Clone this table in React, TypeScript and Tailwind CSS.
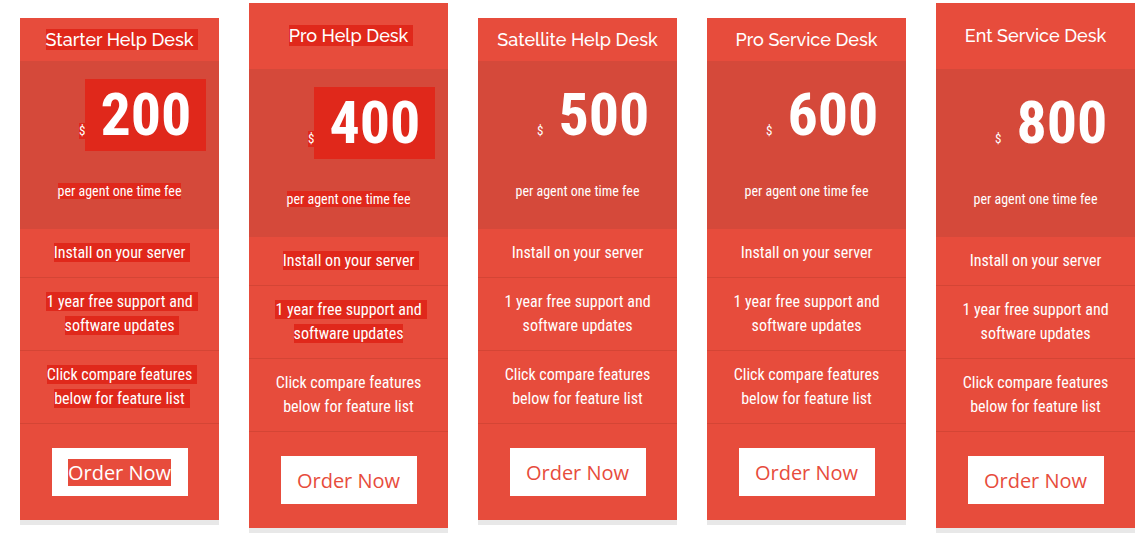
type Plan = {
  name: string;
  price: string;
  featured?: boolean;
  hl: 'all' | 'top' | 'none';
};

const plans: Plan[] = [
  { name: 'Starter Help Desk', price: '200', hl: 'all' },
  { name: 'Pro Help Desk', price: '400', featured: true, hl: 'top' },
  { name: 'Satellite Help Desk', price: '500', hl: 'none' },
  { name: 'Pro Service Desk', price: '600', hl: 'none' },
  { name: 'Ent Service Desk', price: '800', featured: true, hl: 'none' },
];

// selected-text look on some cards
function Mark({ on, tail, children }: { on: boolean; tail?: boolean; children: React.ReactNode }) {
  if (!on) return <span>{children}</span>;
  return <span className={`bg-[#e0281b] ${tail ? 'pr-[5px] -mr-[5px]' : ''}`}>{children}</span>;
}

function PricingCard({ plan }: { plan: Plan }) {
  const all = plan.hl === 'all';
  const top = plan.hl !== 'none';

  return (
    <div
      className={`w-[199px] shrink-0 bg-[#e74c3c] border-b-[5px] border-[#e8e8e8] text-white ${
        plan.featured ? 'mt-[3px]' : 'mt-[18px]'
      }`}
    >
      {/* Header */}
      <div
        className={`flex items-center justify-center text-[18px] font-medium font-['Raleway',sans-serif] ${
          plan.featured ? 'h-[66px]' : 'h-[43px]'
        }`}
      >
        <span className="leading-[21px] -mt-px">
          <Mark on={top} tail>
            {plan.name}
          </Mark>
        </span>
      </div>

      {/* Price */}
      <div className="h-[168px] bg-[#d5493a] pt-[18px] font-['Roboto_Condensed',sans-serif]">
        <div className="flex items-baseline pl-[59px]">
          <span className={`text-[13px] leading-4 ${top ? 'bg-[#e0281b]' : ''}`}>$</span>
          <span className={`pl-[15px] pr-[15px] text-[60px] font-bold leading-[72px] ${top ? 'bg-[#e0281b]' : ''}`}>
            {plan.price}
          </span>
        </div>
        <div className="mt-[32px] text-center text-[14px] leading-4">
          <Mark on={top}>per agent one time fee</Mark>
        </div>
      </div>

      {/* Features */}
      <div className="font-['Roboto_Condensed',sans-serif] text-[16px] leading-6 text-center">
        <div className="h-[49px] pt-3 border-b border-[#d44535]">
          <Mark on={top} tail>
            Install on your server
          </Mark>
        </div>
        <div className="h-[73px] pt-3 border-b border-[#d44535]">
          <Mark on={top} tail>
            1 year free support and
          </Mark>
          <br />
          <Mark on={top} tail={all}>
            software updates
          </Mark>
        </div>
        <div className="h-[73px] pt-3 border-b border-[#d44535]">
          <Mark on={all} tail>
            Click compare features
          </Mark>
          <br />
          <Mark on={all} tail>
            below for feature list
          </Mark>
        </div>
      </div>

      {/* Button */}
      <div className="h-[96px] flex items-center justify-center">
        <button className="w-[136px] h-[48px] bg-white text-[#e74c3c] text-[20px] font-['Open_Sans',sans-serif] flex items-center justify-center">
          <span className={`leading-[27px] ${all ? 'bg-[#e74c3c] text-white' : ''}`}>Order Now</span>
        </button>
      </div>
    </div>
  );
}

export default function App() {
  return (
    <div className="w-[1145px] h-[535px] bg-white flex items-start gap-[30px] pl-[20px]">
      {plans.map((p) => (
        <PricingCard key={p.name} plan={p} />
      ))}
    </div>
  );
}
